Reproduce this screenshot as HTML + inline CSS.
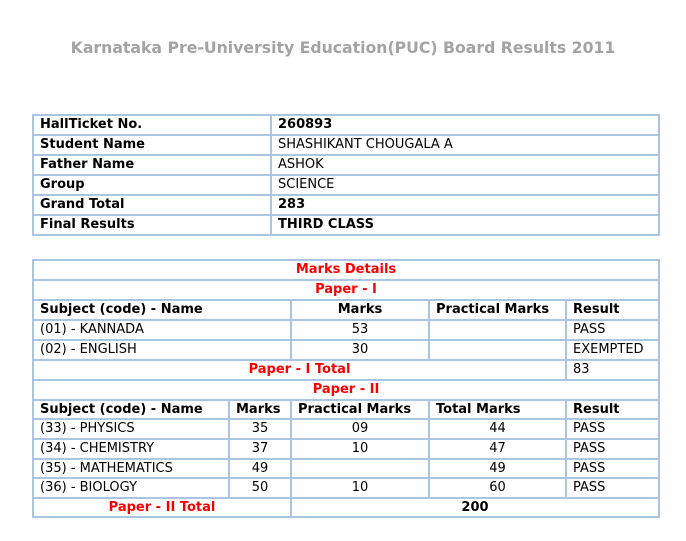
<!DOCTYPE html>
<html><head><meta charset="utf-8"><style>
body{margin:0;background:#fff;font-family:"DejaVu Sans","Liberation Sans",sans-serif;font-size:13px;color:#000}
h1{position:absolute;top:38px;left:0;width:686px;margin:0;text-align:center;font-size:15.7px;color:#a3a3a3;font-weight:bold}
table{position:absolute;left:32px;width:628px;border-collapse:collapse;border:2px solid #a9c5e2;table-layout:fixed}
td{border:2px solid #a9c5e2;padding:0 6px;height:18px;line-height:18px;white-space:nowrap;overflow:hidden}
tr.s td{height:17px;line-height:17px}
.b{font-weight:bold}.c{text-align:center}.r{color:#f00;font-weight:bold;text-align:center}
</style></head><body>
<h1>Karnataka Pre-University Education(PUC) Board Results 2011</h1>
<table style="top:114px">
<colgroup><col style="width:238px"><col></colgroup>
<tr><td class="b">HallTicket No.</td><td class="b">260893</td></tr>
<tr><td class="b">Student Name</td><td>SHASHIKANT CHOUGALA A</td></tr>
<tr><td class="b">Father Name</td><td>ASHOK</td></tr>
<tr><td class="b">Group</td><td>SCIENCE</td></tr>
<tr><td class="b">Grand Total</td><td class="b">283</td></tr>
<tr><td class="b">Final Results</td><td class="b">THIRD CLASS</td></tr>
</table>
<table style="top:259px">
<colgroup><col style="width:196px"><col style="width:62px"><col style="width:138px"><col style="width:137px"><col></colgroup>
<tr><td colspan="5" class="r">Marks Details</td></tr>
<tr><td colspan="5" class="r">Paper - I</td></tr>
<tr><td colspan="2" class="b">Subject (code) - Name</td><td class="b c">Marks</td><td class="b">Practical Marks</td><td class="b">Result</td></tr>
<tr><td colspan="2">(01) - KANNADA</td><td class="c">53</td><td></td><td>PASS</td></tr>
<tr><td colspan="2">(02) - ENGLISH</td><td class="c">30</td><td></td><td>EXEMPTED</td></tr>
<tr><td colspan="4" class="r">Paper - I Total</td><td>83</td></tr>
<tr><td colspan="5" class="r">Paper - II</td></tr>
<tr class="s"><td class="b">Subject (code) - Name</td><td class="b">Marks</td><td class="b">Practical Marks</td><td class="b">Total Marks</td><td class="b">Result</td></tr>
<tr><td>(33) - PHYSICS</td><td class="c">35</td><td class="c">09</td><td class="c">44</td><td>PASS</td></tr>
<tr><td>(34) - CHEMISTRY</td><td class="c">37</td><td class="c">10</td><td class="c">47</td><td>PASS</td></tr>
<tr class="s"><td>(35) - MATHEMATICS</td><td class="c">49</td><td></td><td class="c">49</td><td>PASS</td></tr>
<tr><td>(36) - BIOLOGY</td><td class="c">50</td><td class="c">10</td><td class="c">60</td><td>PASS</td></tr>
<tr class="s"><td colspan="2" class="r">Paper - II Total</td><td colspan="3" class="b c">200</td></tr>
</table>
</body></html>
